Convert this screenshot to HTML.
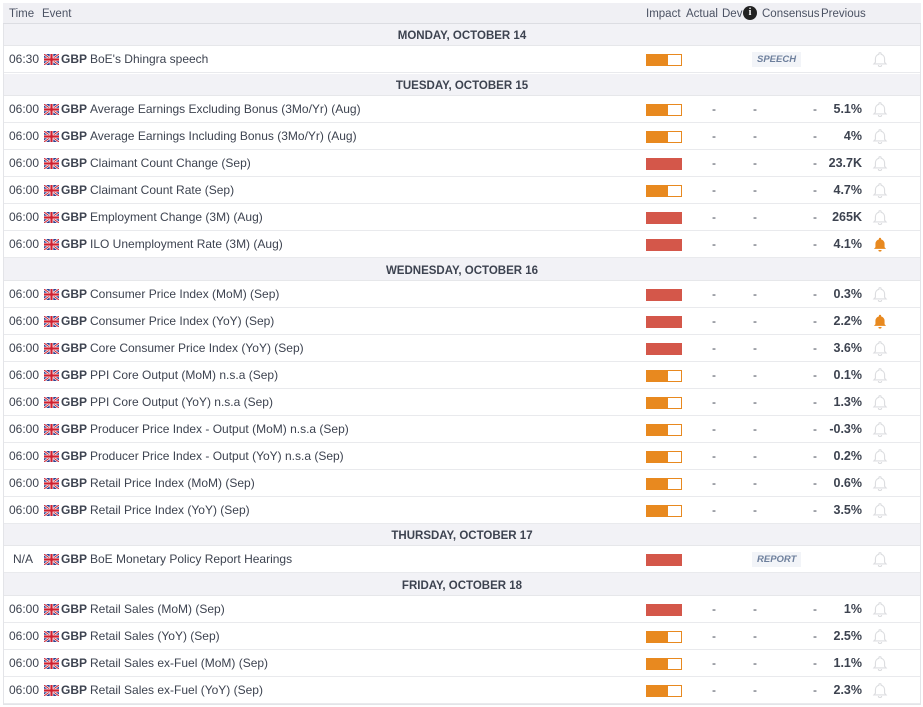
<!DOCTYPE html>
<html><head><meta charset="utf-8">
<style>
*{margin:0;padding:0;box-sizing:border-box}
body{width:923px;height:707px;background:#fff;font-family:"Liberation Sans",Arial,sans-serif;font-size:12px;color:#3d4350;position:relative;overflow:hidden}
.wrap{position:absolute;left:3px;top:3px;width:918px;height:702px;border:1px solid #e3e4e8;border-top:none;background:#fff}
.hd{position:absolute;left:3px;top:3px;width:918px;height:21px;background:#f0f0f4;border-bottom:1px solid #dcdde2;color:#4b5263;font-size:11.5px}
.hd span{position:absolute;top:5px}
.day{position:absolute;left:4px;width:916px;background:#f2f2f6;text-align:center;font-weight:bold;font-size:11.5px;color:#3d4350;border-bottom:1px solid #e6e7ea;padding-top:2px}
.r{position:absolute;left:4px;width:916px;height:27px;border-bottom:1px solid #e9eaed;background:#fff}
.r span{position:absolute;top:6px;white-space:nowrap}
.t{left:5px}
.c{left:57px;font-weight:bold}
.e{left:86px}
.b{left:642px;top:8px!important;width:36px;height:12px;border:1px solid #e8891f;background:#fff}
.b i{position:absolute;left:0;top:0;height:10px;width:21px;background:#e8891f}
.b.h{background:#d4574a;border-color:#d4574a}
.b.h i{display:none}
.d1{left:708px}.d2{left:749px}.d3{left:809px}
.p{right:58px;font-weight:bold;font-size:12.5px;text-align:right}
.tag{left:748px;top:6px!important;background:#f2f4f8;color:#6d7f9c;font-style:italic;font-weight:bold;font-size:9.5px;padding:2px 5px}
svg.bl{position:absolute;left:868px;top:5px}
svg.fl{position:absolute;left:40px;top:8px}
</style></head><body>
<svg width="0" height="0" style="position:absolute"><defs>
<symbol id="uk" viewBox="0 0 15 11"><rect width="15" height="11" fill="#2d3f8f"/><path d="M0 0L15 11M15 0L0 11" stroke="#fff" stroke-width="2.4"/><path d="M0 0L15 11M15 0L0 11" stroke="#cf2030" stroke-width="1"/><path d="M7.5 0V11M0 5.5H15" stroke="#fff" stroke-width="3.6"/><path d="M7.5 0V11M0 5.5H15" stroke="#cf2030" stroke-width="2.2"/></symbol>
<symbol id="bo" viewBox="0 0 14 14"><path d="M7 1.5a1 1 0 0 1 1 1v.4a4 4 0 0 1 3 3.9v3l1.3 1.5H1.7L3 9.8v-3a4 4 0 0 1 3-3.9v-.4a1 1 0 0 1 1-1z" fill="none" stroke="#dcdde0" stroke-width="1"/><path d="M5.6 12.3a1.4 1.4 0 0 0 2.8 0" fill="none" stroke="#dcdde0"/></symbol>
<symbol id="bf" viewBox="0 0 14 14"><path d="M7 1.5a1 1 0 0 1 1 1v.4a4 4 0 0 1 3 3.9v3l1.3 1.5H1.7L3 9.8v-3a4 4 0 0 1 3-3.9v-.4a1 1 0 0 1 1-1z" fill="#e8891f"/><path d="M5.6 12.3a1.4 1.4 0 0 0 2.8 0" fill="#e8891f"/></symbol>
</defs></svg>
<div class="wrap"></div>
<div class="hd"><span style="left:6px">Time</span><span style="left:39px">Event</span><span style="left:643px">Impact</span><span style="left:683px">Actual</span><span style="left:719px">Dev</span><span style="left:740px;top:3px;width:14px;height:14px;border-radius:50%;background:#222;color:#fff;font-weight:bold;font-size:10px;text-align:center;line-height:14px;font-family:'Liberation Serif',serif">i</span><span style="left:759px">Consensus</span><span style="left:818px">Previous</span></div>

<div class="day" style="top:24px;height:22px;line-height:21px">MONDAY, OCTOBER 14</div>
<div class="r" style="top:46px"><span class="t">06:30</span><svg class="fl" width="15" height="11"><use href="#uk"/></svg><span class="c">GBP</span><span class="e">BoE's Dhingra speech</span><span class="b"><i></i></span><span class="tag">SPEECH</span><svg class="bl" width="16" height="16"><use href="#bo"/></svg></div>

<div class="day" style="top:74px;height:22px;line-height:21px">TUESDAY, OCTOBER 15</div>
<div class="r" style="top:96px"><span class="t">06:00</span><svg class="fl" width="15" height="11"><use href="#uk"/></svg><span class="c">GBP</span><span class="e">Average Earnings Excluding Bonus (3Mo/Yr) (Aug)</span><span class="b"><i></i></span><span class="d1">-</span><span class="d2">-</span><span class="d3">-</span><span class="p">5.1%</span><svg class="bl" width="16" height="16"><use href="#bo"/></svg></div>
<div class="r" style="top:123px"><span class="t">06:00</span><svg class="fl" width="15" height="11"><use href="#uk"/></svg><span class="c">GBP</span><span class="e">Average Earnings Including Bonus (3Mo/Yr) (Aug)</span><span class="b"><i></i></span><span class="d1">-</span><span class="d2">-</span><span class="d3">-</span><span class="p">4%</span><svg class="bl" width="16" height="16"><use href="#bo"/></svg></div>
<div class="r" style="top:150px"><span class="t">06:00</span><svg class="fl" width="15" height="11"><use href="#uk"/></svg><span class="c">GBP</span><span class="e">Claimant Count Change (Sep)</span><span class="b h"><i></i></span><span class="d1">-</span><span class="d2">-</span><span class="d3">-</span><span class="p">23.7K</span><svg class="bl" width="16" height="16"><use href="#bo"/></svg></div>
<div class="r" style="top:177px"><span class="t">06:00</span><svg class="fl" width="15" height="11"><use href="#uk"/></svg><span class="c">GBP</span><span class="e">Claimant Count Rate (Sep)</span><span class="b"><i></i></span><span class="d1">-</span><span class="d2">-</span><span class="d3">-</span><span class="p">4.7%</span><svg class="bl" width="16" height="16"><use href="#bo"/></svg></div>
<div class="r" style="top:204px"><span class="t">06:00</span><svg class="fl" width="15" height="11"><use href="#uk"/></svg><span class="c">GBP</span><span class="e">Employment Change (3M) (Aug)</span><span class="b h"><i></i></span><span class="d1">-</span><span class="d2">-</span><span class="d3">-</span><span class="p">265K</span><svg class="bl" width="16" height="16"><use href="#bo"/></svg></div>
<div class="r" style="top:231px"><span class="t">06:00</span><svg class="fl" width="15" height="11"><use href="#uk"/></svg><span class="c">GBP</span><span class="e">ILO Unemployment Rate (3M) (Aug)</span><span class="b h"><i></i></span><span class="d1">-</span><span class="d2">-</span><span class="d3">-</span><span class="p">4.1%</span><svg class="bl" width="16" height="16"><use href="#bf"/></svg></div>

<div class="day" style="top:258px;height:23px;line-height:22px">WEDNESDAY, OCTOBER 16</div>
<div class="r" style="top:281px"><span class="t">06:00</span><svg class="fl" width="15" height="11"><use href="#uk"/></svg><span class="c">GBP</span><span class="e">Consumer Price Index (MoM) (Sep)</span><span class="b h"><i></i></span><span class="d1">-</span><span class="d2">-</span><span class="d3">-</span><span class="p">0.3%</span><svg class="bl" width="16" height="16"><use href="#bo"/></svg></div>
<div class="r" style="top:308px"><span class="t">06:00</span><svg class="fl" width="15" height="11"><use href="#uk"/></svg><span class="c">GBP</span><span class="e">Consumer Price Index (YoY) (Sep)</span><span class="b h"><i></i></span><span class="d1">-</span><span class="d2">-</span><span class="d3">-</span><span class="p">2.2%</span><svg class="bl" width="16" height="16"><use href="#bf"/></svg></div>
<div class="r" style="top:335px"><span class="t">06:00</span><svg class="fl" width="15" height="11"><use href="#uk"/></svg><span class="c">GBP</span><span class="e">Core Consumer Price Index (YoY) (Sep)</span><span class="b h"><i></i></span><span class="d1">-</span><span class="d2">-</span><span class="d3">-</span><span class="p">3.6%</span><svg class="bl" width="16" height="16"><use href="#bo"/></svg></div>
<div class="r" style="top:362px"><span class="t">06:00</span><svg class="fl" width="15" height="11"><use href="#uk"/></svg><span class="c">GBP</span><span class="e">PPI Core Output (MoM) n.s.a (Sep)</span><span class="b"><i></i></span><span class="d1">-</span><span class="d2">-</span><span class="d3">-</span><span class="p">0.1%</span><svg class="bl" width="16" height="16"><use href="#bo"/></svg></div>
<div class="r" style="top:389px"><span class="t">06:00</span><svg class="fl" width="15" height="11"><use href="#uk"/></svg><span class="c">GBP</span><span class="e">PPI Core Output (YoY) n.s.a (Sep)</span><span class="b"><i></i></span><span class="d1">-</span><span class="d2">-</span><span class="d3">-</span><span class="p">1.3%</span><svg class="bl" width="16" height="16"><use href="#bo"/></svg></div>
<div class="r" style="top:416px"><span class="t">06:00</span><svg class="fl" width="15" height="11"><use href="#uk"/></svg><span class="c">GBP</span><span class="e">Producer Price Index - Output (MoM) n.s.a (Sep)</span><span class="b"><i></i></span><span class="d1">-</span><span class="d2">-</span><span class="d3">-</span><span class="p">-0.3%</span><svg class="bl" width="16" height="16"><use href="#bo"/></svg></div>
<div class="r" style="top:443px"><span class="t">06:00</span><svg class="fl" width="15" height="11"><use href="#uk"/></svg><span class="c">GBP</span><span class="e">Producer Price Index - Output (YoY) n.s.a (Sep)</span><span class="b"><i></i></span><span class="d1">-</span><span class="d2">-</span><span class="d3">-</span><span class="p">0.2%</span><svg class="bl" width="16" height="16"><use href="#bo"/></svg></div>
<div class="r" style="top:470px"><span class="t">06:00</span><svg class="fl" width="15" height="11"><use href="#uk"/></svg><span class="c">GBP</span><span class="e">Retail Price Index (MoM) (Sep)</span><span class="b"><i></i></span><span class="d1">-</span><span class="d2">-</span><span class="d3">-</span><span class="p">0.6%</span><svg class="bl" width="16" height="16"><use href="#bo"/></svg></div>
<div class="r" style="top:497px"><span class="t">06:00</span><svg class="fl" width="15" height="11"><use href="#uk"/></svg><span class="c">GBP</span><span class="e">Retail Price Index (YoY) (Sep)</span><span class="b"><i></i></span><span class="d1">-</span><span class="d2">-</span><span class="d3">-</span><span class="p">3.5%</span><svg class="bl" width="16" height="16"><use href="#bo"/></svg></div>

<div class="day" style="top:524px;height:22px;line-height:21px">THURSDAY, OCTOBER 17</div>
<div class="r" style="top:546px"><span class="t" style="left:9px">N/A</span><svg class="fl" width="15" height="11"><use href="#uk"/></svg><span class="c">GBP</span><span class="e">BoE Monetary Policy Report Hearings</span><span class="b h"><i></i></span><span class="tag">REPORT</span><svg class="bl" width="16" height="16"><use href="#bo"/></svg></div>

<div class="day" style="top:573px;height:23px;line-height:22px">FRIDAY, OCTOBER 18</div>
<div class="r" style="top:596px"><span class="t">06:00</span><svg class="fl" width="15" height="11"><use href="#uk"/></svg><span class="c">GBP</span><span class="e">Retail Sales (MoM) (Sep)</span><span class="b h"><i></i></span><span class="d1">-</span><span class="d2">-</span><span class="d3">-</span><span class="p">1%</span><svg class="bl" width="16" height="16"><use href="#bo"/></svg></div>
<div class="r" style="top:623px"><span class="t">06:00</span><svg class="fl" width="15" height="11"><use href="#uk"/></svg><span class="c">GBP</span><span class="e">Retail Sales (YoY) (Sep)</span><span class="b"><i></i></span><span class="d1">-</span><span class="d2">-</span><span class="d3">-</span><span class="p">2.5%</span><svg class="bl" width="16" height="16"><use href="#bo"/></svg></div>
<div class="r" style="top:650px"><span class="t">06:00</span><svg class="fl" width="15" height="11"><use href="#uk"/></svg><span class="c">GBP</span><span class="e">Retail Sales ex-Fuel (MoM) (Sep)</span><span class="b"><i></i></span><span class="d1">-</span><span class="d2">-</span><span class="d3">-</span><span class="p">1.1%</span><svg class="bl" width="16" height="16"><use href="#bo"/></svg></div>
<div class="r" style="top:677px"><span class="t">06:00</span><svg class="fl" width="15" height="11"><use href="#uk"/></svg><span class="c">GBP</span><span class="e">Retail Sales ex-Fuel (YoY) (Sep)</span><span class="b"><i></i></span><span class="d1">-</span><span class="d2">-</span><span class="d3">-</span><span class="p">2.3%</span><svg class="bl" width="16" height="16"><use href="#bo"/></svg></div>
</body></html>
